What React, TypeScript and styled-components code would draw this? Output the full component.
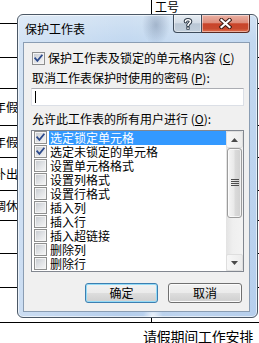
import React from "react";
import styled, { createGlobalStyle } from "styled-components";

const GlobalStyle = createGlobalStyle`
  html, body { margin: 0; padding: 0; background: #fff; overflow: hidden; }
  body {
    font-family: "Noto Sans CJK SC", "Noto Sans", sans-serif;
    font-size: 12px;
    color: #000;
  }
  * { box-sizing: border-box; }
`;

const Sheet = styled.div`
  position: relative;
  width: 259px;
  height: 343px;
  overflow: hidden;
  background: #fff;
`;

const Row = styled.div<{ $h: number; $line?: boolean }>`
  display: grid;
  grid-template-columns: 152px 1fr;
  height: ${(p) => p.$h}px;
  border-bottom: ${(p) => (p.$line === false ? "none" : "1px solid #000")};
`;

const LeftCell = styled.div<{ $split?: boolean }>`
  display: flex;
  align-items: center;
  border-right: ${(p) => (p.$split ? "1px solid #000" : "none")};
  line-height: 14px;
  white-space: nowrap;
`;

const CellText = styled.span`
  margin-left: -6px;
`;

const HeadCell = styled.div`
  padding-left: 3px;
  line-height: 13px;
`;

const FooterRow = styled.div`
  padding: 6px 0 0 143px;
  font-size: 14px;
  line-height: 14px;
  letter-spacing: -0.25px;
  white-space: nowrap;
`;

/* ---------- dialog ---------- */

const Window = styled.div`
  position: absolute;
  left: 17px;
  top: 14px;
  width: 241px;
  height: 304px;
  display: flex;
  flex-direction: column;
  border: 1px solid #4b5866;
  border-radius: 6px;
  background:
    radial-gradient(ellipse 14px 20px at 138px 10px, rgba(80, 100, 130, 0.35), rgba(80, 100, 130, 0)),
    radial-gradient(ellipse 10px 8px at 135px 300px, rgba(255, 255, 255, 0.7), rgba(255, 255, 255, 0)),
    linear-gradient(to right, rgba(255, 255, 255, 0.3), rgba(255, 255, 255, 0) 45%, rgba(255, 255, 255, 0.12) 70%, rgba(255, 255, 255, 0)),
    linear-gradient(to bottom, #d2e2f3 0px, #c2d8f0 26px, #b6cfed 100%);
  box-shadow: inset 0 0 0 1px rgba(255, 255, 255, 0.6);
`;

const TitleBar = styled.div`
  height: 27px;
  display: flex;
  align-items: flex-start;
  padding-left: 7px;
  flex: none;
`;

const Title = styled.div`
  padding-top: 7px;
  line-height: 14px;
  color: #000;
`;

const CaptionButtons = styled.div`
  margin-left: auto;
  margin-right: 7px;
  display: flex;
`;

const CaptionButton = styled.div<{ $close?: boolean }>`
  width: ${(p) => (p.$close ? 48 : 29)}px;
  height: 18px;
  display: flex;
  align-items: center;
  justify-content: center;
  border: 1px solid ${(p) => (p.$close ? "#5a2a22" : "#3e4c5c")};
  border-top: none;
  border-left: ${(p) => (p.$close ? "none" : undefined)};
  border-radius: ${(p) => (p.$close ? "0 0 4px 0" : "0 0 0 4px")};
  background: ${(p) =>
    p.$close
      ? "linear-gradient(to bottom, #eab1a4 0%, #de8d7b 45%, #c9442a 52%, #c84a2f 80%, #e2714f 100%)"
      : "linear-gradient(to bottom, #e6ecf2 0%, #d4dde7 45%, #bac7d5 52%, #c2cfdc 100%)"};
  box-shadow: inset 0 0 0 1px rgba(255, 255, 255, 0.45);
`;

const Client = styled.div`
  flex: 1;
  margin: 0 7px 5px 5px;
  border: 1px solid #8a9db3;
  background: #f0f0f0;
  padding: 0 5px 0 7px;
  display: flex;
  flex-direction: column;
`;

const CheckRow = styled.div`
  margin-top: 8px;
  height: 14px;
  display: flex;
  align-items: center;
  gap: 3px;
  padding-left: 1px;
  line-height: 14px;
  white-space: nowrap;
`;

const Label = styled.div<{ $gap: number }>`
  margin-top: ${(p) => p.$gap}px;
  line-height: 14px;
  padding-left: 1px;
  white-space: nowrap;
`;

const TextBox = styled.div`
  margin-top: 3px;
  height: 18px;
  background: #fff;
  border: 1px solid #dbdfe6;
  border-top-color: #abadb3;
  border-left-color: #e2e3ea;
  padding: 2px 0 0 3px;
`;

const Caret = styled.div`
  width: 1px;
  height: 12px;
  background: #000;
`;

const ListBox = styled.div`
  margin-top: 4px;
  height: 142px;
  border: 1px solid #828790;
  background: #fff;
  display: flex;
`;

const Items = styled.div`
  flex: 1;
  display: flex;
  flex-direction: column;
`;

const Item = styled.div`
  height: 14px;
  flex: none;
  display: flex;
  align-items: flex-start;
  padding-left: 2px;
`;

const ItemLabel = styled.div<{ $selected?: boolean }>`
  flex: 1;
  margin-left: 2px;
  height: 14px;
  line-height: 14px;
  padding-left: 1px;
  white-space: nowrap;
  background: ${(p) => (p.$selected ? "#3399ff" : "transparent")};
  color: ${(p) => (p.$selected ? "#fff" : "#000")};
`;

const Box = styled.span`
  width: 13px;
  height: 13px;
  flex: none;
  display: block;
  border: 1px solid #8e8f8f;
  background: linear-gradient(135deg, #c4c8ce 0%, #e0e2e5 50%, #f7f7f7 100%);
  box-shadow: inset 0 0 0 1px #f4f4f4;
`;

const ScrollBar = styled.div`
  width: 17px;
  flex: none;
  display: flex;
  flex-direction: column;
  background: linear-gradient(to right, #e3e3e3 0%, #efefef 40%, #f3f3f3 100%);
`;

const ScrollButton = styled.div`
  height: 17px;
  flex: none;
  display: flex;
  align-items: center;
  justify-content: center;
  border: 1px solid #dedede;
  border-radius: 2px;
  background: linear-gradient(to right, #f7f7f7, #ececec);
`;

const Track = styled.div`
  flex: 1;
  display: flex;
  flex-direction: column;
`;

const Thumb = styled.div`
  height: 70px;
  margin: 0 1px;
  border: 1px solid #9c9c9c;
  border-radius: 3px;
  background: linear-gradient(to right, #f5f5f5 0%, #e9e9e9 45%, #dadada 55%, #d0d0d0 100%);
  box-shadow: inset 0 0 0 1px rgba(255, 255, 255, 0.7);
  display: flex;
  align-items: center;
  justify-content: center;
`;

const ButtonRow = styled.div`
  margin-top: 11px;
  display: flex;
  justify-content: flex-end;
  gap: 10px;
  padding-right: 2px;
`;

const PushButton = styled.div<{ $default?: boolean; $w: number }>`
  width: ${(p) => p.$w}px;
  height: 20px;
  display: flex;
  align-items: center;
  justify-content: center;
  line-height: 14px;
  border: 1px solid ${(p) => (p.$default ? "#3c7fb1" : "#707070")};
  border-radius: 3px;
  background: linear-gradient(to bottom, #f2f2f2 0%, #ebebeb 48%, #dddddd 52%, #cfcfcf 100%);
  box-shadow: inset 0 0 0 1px ${(p) => (p.$default ? "#94dbf7" : "#fbfbfb")};
`;

const CheckBox = ({ checked }: { checked?: boolean }) => (
  <Box>
    {checked && (
      <svg width="11" height="11" viewBox="0 0 11 11" style={{ display: "block" }}>
        <path d="M2.2 5.3 L4.4 7.8 L8.8 2.4" fill="none" stroke="#2c4a8c" strokeWidth="1.8" strokeLinecap="square" />
      </svg>
    )}
  </Box>
);

const HelpIcon = () => (
  <svg width="10" height="12" viewBox="0 0 10 12">
    <g fill="none" strokeLinecap="round">
      <path d="M2.5 3.6 C2.5 1.2 7.5 1.2 7.5 3.6 C7.5 5.4 5 5.4 5 7.4" stroke="#2d3845" strokeWidth="3.6" />
      <path d="M2.5 3.6 C2.5 1.2 7.5 1.2 7.5 3.6 C7.5 5.4 5 5.4 5 7.4" stroke="#fff" strokeWidth="1.6" />
    </g>
    <rect x="3.4" y="8.7" width="3.2" height="3" fill="#2d3845" />
    <rect x="4.2" y="9.5" width="1.6" height="1.4" fill="#fff" />
  </svg>
);

const CloseIcon = () => (
  <svg width="13" height="11" viewBox="0 0 13 11">
    <g strokeLinecap="square">
      <path d="M2.5 2 L10.5 9 M10.5 2 L2.5 9" stroke="#3b1a14" strokeWidth="4.2" />
      <path d="M2.5 2 L10.5 9 M10.5 2 L2.5 9" stroke="#fff" strokeWidth="2.2" />
    </g>
  </svg>
);

const Arrow = ({ down }: { down?: boolean }) => (
  <svg width="7" height="4" viewBox="0 0 7 4">
    <path d={down ? "M0 0 L7 0 L3.5 4 Z" : "M0 4 L7 4 L3.5 0 Z"} fill="#4a4a4a" />
  </svg>
);

const Grip = () => (
  <svg width="8" height="8" viewBox="0 0 8 8">
    {[0, 2, 4, 6].map((y) => (
      <rect key={y} x="0" y={y} width="8" height="1" fill="#4d4d4d" />
    ))}
  </svg>
);

const items: { text: string; checked?: boolean; selected?: boolean }[] = [
  { text: "选定锁定单元格", checked: true, selected: true },
  { text: "选定未锁定的单元格", checked: true },
  { text: "设置单元格格式" },
  { text: "设置列格式" },
  { text: "设置行格式" },
  { text: "插入列" },
  { text: "插入行" },
  { text: "插入超链接" },
  { text: "删除列" },
  { text: "删除行" },
];

const sheetRows: { h: number; text?: string }[] = [
  { h: 34 },
  { h: 31 },
  { h: 37, text: "年假" },
  { h: 32, text: "年假" },
  { h: 33, text: "补出" },
  { h: 30, text: "调休" },
  { h: 33 },
  { h: 34 },
  { h: 35 },
];

export default function App() {
  return (
    <>
      <GlobalStyle />
      <Sheet>
        <Row $h={24}>
          <LeftCell $split />
          <HeadCell>工号</HeadCell>
        </Row>
        {sheetRows.map((r, i) => (
          <Row key={i} $h={r.h}>
            <LeftCell $split>{r.text && <CellText>{r.text}</CellText>}</LeftCell>
            <div />
          </Row>
        ))}
        <FooterRow>请假期间工作安排</FooterRow>

        <Window>
          <TitleBar>
            <Title>保护工作表</Title>
            <CaptionButtons>
              <CaptionButton>
                <HelpIcon />
              </CaptionButton>
              <CaptionButton $close>
                <CloseIcon />
              </CaptionButton>
            </CaptionButtons>
          </TitleBar>
          <Client>
            <CheckRow>
              <CheckBox checked />
              <span>
                保护工作表及锁定的单元格内容 (<u>C</u>)
              </span>
            </CheckRow>
            <Label $gap={6}>
              取消工作表保护时使用的密码 (<u>P</u>):
            </Label>
            <TextBox>
              <Caret />
            </TextBox>
            <Label $gap={6}>
              允许此工作表的所有用户进行 (<u>O</u>):
            </Label>
            <ListBox>
              <Items>
                {items.map((it) => (
                  <Item key={it.text}>
                    <CheckBox checked={it.checked} />
                    <ItemLabel $selected={it.selected}>{it.text}</ItemLabel>
                  </Item>
                ))}
              </Items>
              <ScrollBar>
                <ScrollButton>
                  <Arrow />
                </ScrollButton>
                <Track>
                  <Thumb>
                    <Grip />
                  </Thumb>
                </Track>
                <ScrollButton>
                  <Arrow down />
                </ScrollButton>
              </ScrollBar>
            </ListBox>
            <ButtonRow>
              <PushButton $default $w={73}>
                确定
              </PushButton>
              <PushButton $w={74}>取消</PushButton>
            </ButtonRow>
          </Client>
        </Window>
      </Sheet>
    </>
  );
}
